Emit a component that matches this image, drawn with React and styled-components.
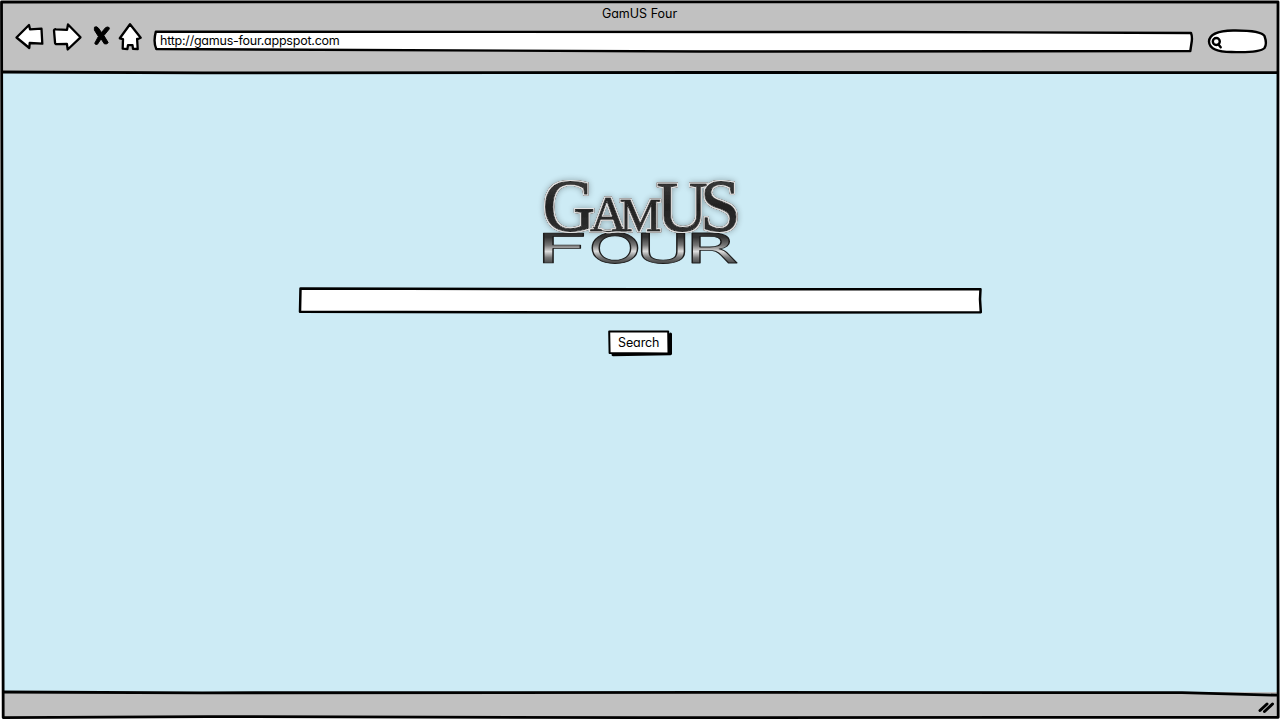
import React from "react";
import styled, { createGlobalStyle } from "styled-components";

const GlobalStyle = createGlobalStyle`
  * { box-sizing: border-box; }
  html, body { margin: 0; padding: 0; background: #fff; }
  body { overflow: hidden; }
`;

const BrowserWindow = styled.div`
  position: relative;
  display: flex;
  flex-direction: column;
  width: 1280px;
  height: 720px;
  padding: 2px;
  font-family: Inter, "Open Sans", sans-serif;
  font-feature-settings: "cv11" 1;
  font-size: 12.5px;
  color: #000;
`;

const Chrome = styled.header`
  flex: 0 0 71px;
  background: #c1c1c1;
`;

const Title = styled.div`
  height: 22px;
  line-height: 24px;
  padding-right: 1px;
  text-align: center;
  letter-spacing: ${(p) => p.$spacing}px;
`;

const Toolbar = styled.div`
  display: flex;
  align-items: flex-start;
  padding-left: 12px;
`;

const ToolIcon = styled.svg`
  flex: none;
  display: block;
  width: ${(p) => p.$w}px;
  height: 32px;
  margin-right: ${(p) => p.$gap || 0}px;
  margin-top: -4px;
  fill: ${(p) => p.$fill || "#fff"};
  stroke: #000;
  stroke-width: 2.3;
  stroke-linejoin: round;
  stroke-linecap: round;
`;

const SketchBox = styled.div`
  position: relative;
  flex: none;
  width: ${(p) => p.$w}px;
  height: ${(p) => p.$h}px;
`;

const SketchOutline = styled.svg`
  position: absolute;
  inset: 0;
  width: 100%;
  height: 100%;
  overflow: visible;
  fill: #fff;
  stroke: #000;
  stroke-width: 2.4;
  stroke-linejoin: round;
  stroke-linecap: round;
`;

const Address = styled(SketchBox)`
  margin-top: 6px;
  margin-right: 14px;
`;

const Quick = styled(SketchBox)`
  margin-top: 4px;
`;

const Label = styled.span`
  position: relative;
  display: block;
  height: ${(p) => p.$h}px;
  line-height: ${(p) => p.$h}px;
  padding-left: ${(p) => p.$left}px;
  letter-spacing: ${(p) => p.$spacing}px;
  white-space: nowrap;
`;

const Page = styled.main`
  flex: 1;
  display: flex;
  flex-direction: column;
  align-items: center;
  padding-top: 97px;
  background: #cdebf5;
`;

const Logo = styled.svg`
  display: block;
  width: 220px;
  height: 105px;
  overflow: visible;
`;

const LogoTop = styled.text`
  font-family: "Liberation Serif", serif;
  fill: url(#ink);
  stroke: #2b2b2b;
  stroke-width: 0.9;
  stroke-linejoin: round;
`;

const LogoGlow = styled.g`
  filter: url(#rim);
`;

const LogoBottom = styled.text`
  font-family: "DejaVu Sans", sans-serif;
  font-size: 41px;
  fill: url(#metal);
  stroke: #1c1c1c;
  stroke-width: 1.2;
  stroke-linejoin: round;
  vector-effect: non-scaling-stroke;
`;

const SearchField = styled(SketchBox)`
  margin-top: 12px;
`;

const SearchButton = styled.button`
  position: relative;
  width: 64px;
  height: 27px;
  margin-top: 16px;
  padding: 0;
  border: 0;
  background: none;
  color: inherit;
  font: inherit;
  font-feature-settings: inherit;
  text-align: left;
`;

const StatusBar = styled.footer`
  flex: 0 0 26px;
  display: flex;
  justify-content: flex-end;
  align-items: flex-start;
  background: #c1c1c1;
`;

const Grip = styled.svg`
  width: 20px;
  height: 20px;
  margin: 5px 1px 0 0;
  stroke: #000;
  stroke-width: 3;
  stroke-linecap: round;
  fill: none;
`;

const Frame = styled.svg`
  position: absolute;
  inset: 0;
  width: 1280px;
  height: 720px;
  pointer-events: none;
  fill: none;
  stroke: #000;
  stroke-width: 2.8;
  stroke-linejoin: round;
`;

const fourLetters = [
  { char: "F", x: 534.5, stretch: 2.3 },
  { char: "O", x: 588.5, stretch: 1.64 },
  { char: "U", x: 635, stretch: 1.87 },
  { char: "R", x: 684.5, stretch: 1.92 },
];

function GamusLogo() {
  return (
    <Logo viewBox="530 170 220 105" role="img" aria-label="GamUS Four">
      <defs>
        <linearGradient id="ink" x1="0" y1="0" x2="0" y2="1">
          <stop offset="0" stopColor="#484848" />
          <stop offset="0.5" stopColor="#222" />
          <stop offset="1" stopColor="#393939" />
        </linearGradient>
        <linearGradient id="metal" x1="0" y1="0" x2="0" y2="1">
          <stop offset="0.25" stopColor="#333" />
          <stop offset="0.42" stopColor="#777" />
          <stop offset="0.55" stopColor="#ddd" />
          <stop offset="0.68" stopColor="#777" />
          <stop offset="0.85" stopColor="#333" />
        </linearGradient>
        <filter id="rim" x="-10%" y="-20%" width="120%" height="140%">
          <feMorphology in="SourceAlpha" operator="dilate" radius="1" result="wide" />
          <feFlood floodColor="#e4e4e4" />
          <feComposite in2="wide" operator="in" result="light" />
          <feGaussianBlur in="wide" stdDeviation="0.6" result="soft" />
          <feComponentTransfer in="soft" result="edge">
            <feFuncA type="linear" slope="2.2" />
          </feComponentTransfer>
          <feGaussianBlur in="wide" stdDeviation="3" result="haze" />
          <feComponentTransfer in="haze" result="shade">
            <feFuncA type="linear" slope="0.32" />
          </feComponentTransfer>
          <feMerge>
            <feMergeNode in="shade" />
            <feMergeNode in="edge" />
            <feMergeNode in="light" />
            <feMergeNode in="SourceGraphic" />
          </feMerge>
        </filter>
      </defs>
      {fourLetters.map((l) => (
        <LogoBottom key={l.char} transform={`translate(${l.x} 263.2) scale(${l.stretch} 1)`}>
          {l.char}
        </LogoBottom>
      ))}
      <LogoGlow>
        <LogoTop y="230.7">
          <tspan x="542.5" fontSize="73">G</tspan>
          <tspan x="590" fontSize="51">A</tspan>
          <tspan x="619.5" fontSize="47">M</tspan>
          <tspan x="656.5" fontSize="71">U</tspan>
          <tspan x="700" fontSize="73">S</tspan>
        </LogoTop>
        <path d="M593 227q16 9 30 0" fill="none" stroke="#333" strokeWidth="1.3" />
      </LogoGlow>
    </Logo>
  );
}

export default function App() {
  return (
    <>
      <GlobalStyle />
      <BrowserWindow>
        <Chrome>
          <Title $spacing={0}>GamUS Four</Title>
          <Toolbar>
            <ToolIcon $w={30} $gap={8} viewBox="14 20 30 32">
              <path d="M16.500 37.500L29 25l1 4.300 11.500-.6.800 15-12.600-.7-.4 5z" />
            </ToolIcon>
            <ToolIcon $w={32} $gap={8} viewBox="52 20 32 32">
              <path d="M54 30.500q.2-1.500 2-1.200l11 .6 1-5.400L80.500 37.300 67.700 49.500l-.8-5.700-10 .4q-2 0-1.900-2z" />
            </ToolIcon>
            <ToolIcon $w={20} $gap={6} $fill="#000" viewBox="92 20 20 32">
              <path strokeWidth="1" d="M94.800 27q2-1 3.500 1l3.200 4.500 4-4.800q1.800-1.300 3.600-.2l.2 1.400-5.400 6.700 4.200 6.900q-.7 2.200-3.800 1.300l-3.200-5-3.600 5.400q-2 .8-2.800-.8l3.700-7-3.800-6z" />
            </ToolIcon>
            <ToolIcon $w={26} $gap={9} viewBox="118 20 26 32">
              <path d="M130 24.300l10.700 13.500-2.200 1-1.400 0 .6 10.200-4.700-.2-.5-3.600-4.500-.1-.6 4-4.700-.4.300-9.600-3.200-.8z" />
            </ToolIcon>
            <Address $w={1040} $h={22}>
              <SketchOutline viewBox="153 30 1040 22">
                <path d="M155.800 31.700Q600 32.600 900 32L1191 33q1.300 3 .8 8l-1.500 10Q900 50.500 700 51.500L156.300 49q-3.200-7-.5-17.300z" />
              </SketchOutline>
              <Label $h={22} $left={7} $spacing={-0.23}>http://gamus-four.appspot.com</Label>
            </Address>
            <Quick $w={60} $h={26}>
              <SketchOutline viewBox="1207 28 60 26">
                <path d="M1209 41.500q.5-10.500 24-11 28-.3 31.500 5.500 2.800 8 0 12-5 5-33 4-22 0-22.500-10.500z" />
                <circle cx="1216.300" cy="41.500" r="3.500" />
                <path d="M1218.500 44.500l2.200 2.800" />
              </SketchOutline>
            </Quick>
          </Toolbar>
        </Chrome>
        <Page>
          <GamusLogo />
          <SearchField $w={683} $h={26}>
            <SketchOutline viewBox="299 288 683 26">
              <path strokeWidth="2.500" d="M300.500 289.500L640 290.200 980.500 290.200l-.5 10 .8 13L640 313.500 300 312.800z" />
            </SketchOutline>
          </SearchField>
          <SearchButton type="button">
            <SketchOutline viewBox="608 330 64 27">
              <path d="M613 355.800l57.500-1V335" strokeWidth="3" fill="none" />
              <path d="M609.200 332.500l59-.1.300 22-58.900-.4z" strokeWidth="2" />
            </SketchOutline>
            <Label $h={26} $left={10} $spacing={-0.1}>Search</Label>
          </SearchButton>
        </Page>
        <StatusBar>
          <Grip viewBox="1257 697 20 20">
            <path d="M1260 710.500l7-6.500M1264.500 711.500l8-7.500" />
          </Grip>
        </StatusBar>
        <Frame viewBox="0 0 1280 720">
          <path d="M1.500 2L640 1.800 1278 2l-.3 500 .5 215.300-640 .4-430-1.100-205 1z" />
          <path d="M2 72l200 .9 500-.4 576 .1M2 692l200 .800 500-.4 480 .2 96 2.600" />
        </Frame>
      </BrowserWindow>
    </>
  );
}
